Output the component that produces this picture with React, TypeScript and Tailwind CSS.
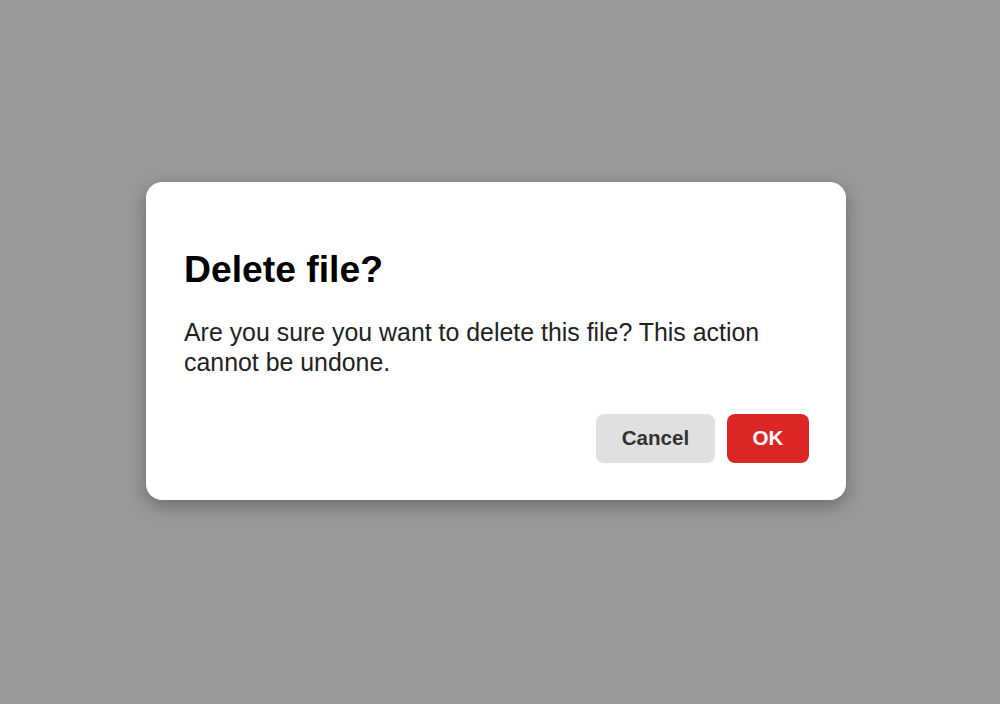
export default function App() {
  return (
    <div className="min-h-[704px] w-full bg-[#999999] flex justify-center pr-2 pt-[182px] font-['Liberation_Sans',Arial,sans-serif]">
      <div className="w-[700px] h-[318px] bg-white rounded-2xl shadow-[0_6px_18px_rgba(0,0,0,0.3)] pl-[38px] pr-[37px] pt-[66px] pb-[37px] flex flex-col">
        <h2 className="text-[37.3px] leading-[43px] font-bold text-black">Delete file?</h2>
        <p className="mt-[26px] text-[24.9px] leading-[30px] text-[#222222]">
          Are you sure you want to delete this file? This action cannot be undone.
        </p>
        <div className="mt-auto flex justify-end gap-3">
          <button className="h-[49px] w-[119px] rounded-lg bg-[#e0e0e0] text-[20.6px] font-bold text-[#333333]">
            Cancel
          </button>
          <button className="h-[49px] w-[82px] rounded-lg bg-[#dc2626] text-[20.6px] font-bold text-white">
            OK
          </button>
        </div>
      </div>
    </div>
  );
}
